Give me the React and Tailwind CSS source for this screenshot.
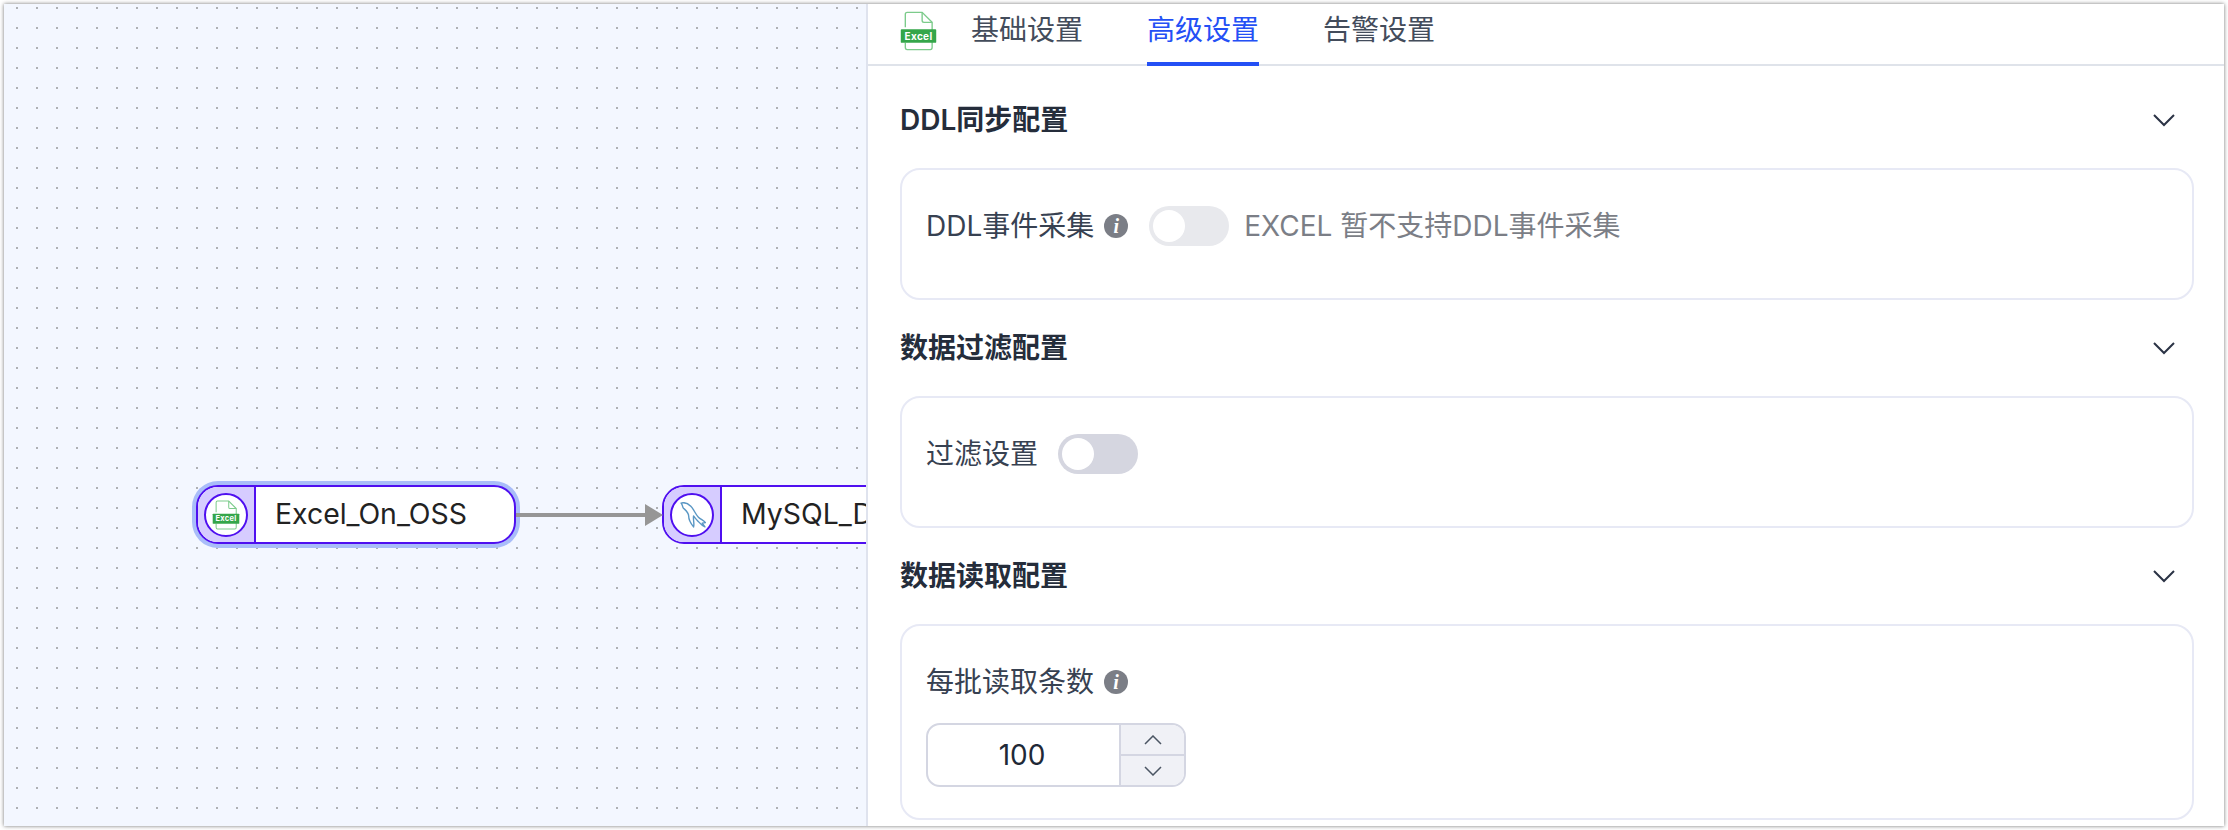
import React from "react";

const font = { fontFamily: '"Inter","Noto Sans CJK SC",sans-serif' };

function ExcelIcon({ className }) {
  return (
    <svg viewBox="0 0 40 44" className={className} fill="none">
      <path d="M5.5 18V3.5Q5.5 1.5 7.5 1.5H24L35 12.5V40Q35 42.5 33 42.5H7.5Q5.5 42.5 5.5 40V35" stroke="#7ccb8b" strokeWidth="1.5" />
      <path d="M24 1.5V10.5Q24 12.5 26 12.5H35" stroke="#7ccb8b" strokeWidth="1.5" />
      <rect x="0.5" y="20" width="39" height="15" rx="1" fill="#34a64a" />
      <text x="20" y="31.5" textAnchor="middle" fontSize="11" fontWeight="700" fill="#fff" fontFamily="Inter, sans-serif" letterSpacing="0.4">Excel</text>
    </svg>
  );
}

function Dolphin() {
  return (
    <svg width="26" height="26" viewBox="0 0 24 24" fill="none" className="ml-[1px]">
      <path
        d="M1 1C4 0 7 1 10 4C13 7 14 11 17 14C19 16 22 17 23.5 19L20.5 19.5L23 23C20 22 18 19 16 17C14.5 15.5 13.5 14 12.5 13C12 17 13.5 20 12.5 23C10 20 8 17 8 13C8 9.5 5 7.5 3 5.5C2 4.5 3 3.5 1 1Z"
        stroke="#5a97c4"
        strokeWidth="1.3"
        strokeLinejoin="round"
      />
    </svg>
  );
}

function Chevron() {
  return (
    <svg width="24" height="14" viewBox="0 0 24 14" fill="none" className="mr-[18px]">
      <path d="M2 2L12 12L22 2" stroke="#2b3345" strokeWidth="2" />
    </svg>
  );
}

function Info() {
  return (
    <span className="flex h-6 w-6 shrink-0 items-center justify-center rounded-full bg-[#7b7e86] text-[20px] font-bold italic leading-none text-white [font-family:'Liberation_Serif',serif]">
      i
    </span>
  );
}

function Heading({ children }) {
  return (
    <div className="flex h-10 items-center justify-between">
      <span className="text-[28px] font-semibold leading-10 text-[#252d3b]">{children}</span>
      <Chevron />
    </div>
  );
}

function Switch({ track }) {
  return (
    <span className={`flex h-10 w-20 shrink-0 items-center rounded-full pl-1 ${track}`}>
      <span className="h-8 w-8 rounded-full bg-white" />
    </span>
  );
}

function Node({ className, icon, label, ring }) {
  return (
    <div
      className={`absolute top-[481px] flex h-[59px] w-[320px] overflow-hidden rounded-[22px] border-2 border-[#4f0ff0] bg-white ${ring ? "shadow-[0_0_0_4px_#a9bdf9]" : ""} ${className}`}
    >
      <div className="flex w-[58px] shrink-0 items-center justify-center border-r-2 border-[#4f0ff0] bg-[#d6ccff]">
        <div className="flex h-[44px] w-[44px] shrink-0 items-center justify-center rounded-full border-2 border-[#4f0ff0] bg-white">
          {icon}
        </div>
      </div>
      <div className="flex items-center pl-[19px] text-[28.4px] leading-none whitespace-nowrap text-[#222222]">{label}</div>
    </div>
  );
}

export default function App() {
  return (
    <div className="h-[830px] w-[2228px] overflow-hidden bg-white pt-[4px] pl-[4px]" style={font}>
      <div className="flex h-[822px] w-[2220px] shadow-[0_0_4px_rgba(0,0,0,0.55)]">
        <div className="relative w-[864px] shrink-0 overflow-hidden border-r-2 border-[#dfe3ee] bg-[#f3f7ff] bg-[radial-gradient(circle,#aeb0b4_1px,transparent_1.2px)] bg-[size:20px_20px] bg-[position:3px_-6px]">
          <Node className="left-[192px]" ring label="Excel_On_OSS" icon={<ExcelIcon className="h-[30px] w-[28px]" />} />
          <Node className="left-[658px]" label="MySQL_D" icon={<Dolphin />} />
          <svg className="absolute top-[499px] left-[512px]" width="150" height="24" viewBox="0 0 150 24">
            <path d="M0 12H132" stroke="#969696" strokeWidth="4" />
            <path d="M129 1L147 12L129 23Z" fill="#969696" />
          </svg>
        </div>
        <div className="min-w-0 flex-1 bg-white">
          <div className="flex h-[62px] items-stretch border-b-2 border-[#dfe3ea] pl-[32px]">
            <ExcelIcon className="mt-[7px] mr-[34px] h-[40px] w-[37px]" />
            <div className="flex gap-[64px] text-[28px] leading-none">
              <span className="pt-[12px] text-[#434c5b]">基础设置</span>
              <span className="h-[62px] border-b-4 border-[#2450f5] pt-[12px] text-[#2450f5]">高级设置</span>
              <span className="pt-[12px] text-[#434c5b]">告警设置</span>
            </div>
          </div>
          <div className="pt-[34px] pr-[30px] pl-[32px]">
            <Heading>DDL同步配置</Heading>
            <div className="my-[28px] flex h-[132px] items-start rounded-[20px] border-2 border-[#e7e9f5] pt-[36px] pl-[24px]">
              <div className="flex items-center text-[28px] leading-10">
                <span className="text-[#374151]">DDL事件采集</span>
                <span className="ml-[10px]"><Info /></span>
                <span className="ml-[21px]"><Switch track="bg-[#e8e9ed]" /></span>
                <span className="ml-[15px] text-[#7b7e86]">EXCEL 暂不支持DDL事件采集</span>
              </div>
            </div>
            <Heading>数据过滤配置</Heading>
            <div className="my-[28px] flex h-[132px] items-start rounded-[20px] border-2 border-[#e7e9f5] pt-[36px] pl-[24px]">
              <div className="flex items-center text-[28px] leading-10">
                <span className="text-[#374151]">过滤设置</span>
                <span className="ml-[20px]"><Switch track="bg-[#d5d6e0]" /></span>
              </div>
            </div>
            <Heading>数据读取配置</Heading>
            <div className="mt-[28px] h-[196px] rounded-[20px] border-2 border-[#e7e9f5] pt-[36px] pl-[24px]">
              <div className="flex h-10 items-center text-[28px]">
                <span className="text-[#374151]">每批读取条数</span>
                <span className="ml-[10px]"><Info /></span>
              </div>
              <div className="mt-[21px] flex h-[64px] w-[260px] overflow-hidden rounded-[14px] border-2 border-[#d4d6e2]">
                <div className="flex flex-1 items-center justify-center pr-[3px] text-[28px] text-[#1f2937]">100</div>
                <div className="flex w-[65px] flex-col border-l-2 border-[#d4d6e2] bg-[#f0f1f6]">
                  <div className="flex flex-1 items-center justify-center border-b-2 border-[#d4d6e2]">
                    <svg width="18" height="10" viewBox="0 0 18 10" fill="none"><path d="M1 9L9 1L17 9" stroke="#4b5563" strokeWidth="1.5" /></svg>
                  </div>
                  <div className="flex flex-1 items-center justify-center">
                    <svg width="18" height="10" viewBox="0 0 18 10" fill="none"><path d="M1 1L9 9L17 1" stroke="#4b5563" strokeWidth="1.5" /></svg>
                  </div>
                </div>
              </div>
            </div>
          </div>
        </div>
      </div>
    </div>
  );
}
